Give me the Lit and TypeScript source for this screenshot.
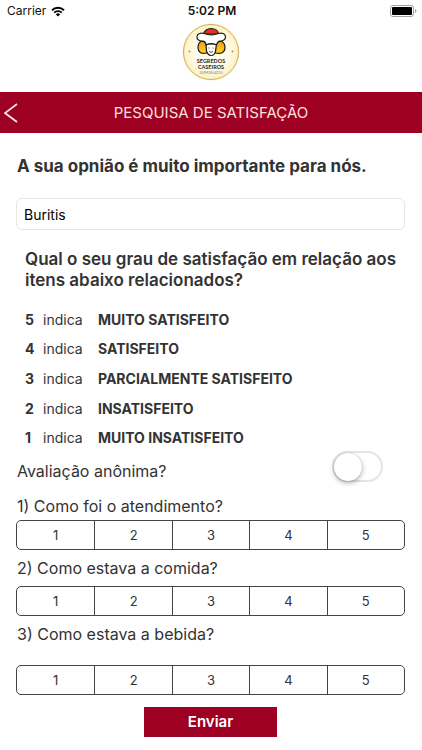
import { LitElement, html, css, svg } from "lit";
import { customElement, state } from "lit/decorators.js";

const logo = svg`
  <defs>
    <radialGradient id="glow" cx="60" cy="60" r="60" gradientUnits="userSpaceOnUse">
      <stop offset="0" stop-color="#fffdf4" />
      <stop offset="0.6" stop-color="#fffbe6" />
      <stop offset="0.9" stop-color="#fcf2c6" />
      <stop offset="1" stop-color="#fffbe6" stop-opacity="0" />
    </radialGradient>
    <linearGradient id="hair" x1="0" y1="0" x2="0" y2="1">
      <stop offset="0" stop-color="#f39a1a" />
      <stop offset="1" stop-color="#fbd822" />
    </linearGradient>
  </defs>
  <circle cx="60" cy="60" r="60" fill="url(#glow)" />
  <circle cx="60" cy="60" r="55" fill="none" stroke="#c9a44c" stroke-width="1.8" />
  <circle cx="17" cy="59" r="2" fill="#c98f3c" />
  <circle cx="103" cy="59" r="2" fill="#c98f3c" />
  <g stroke="#1c1a1a" stroke-width="2.4" stroke-linejoin="round" stroke-linecap="round">
    <path fill="url(#hair)" d="M41 38C35 41 34 46 34 51C34 60 40 65 52 62L52 42Z" />
    <path fill="url(#hair)" d="M80 38C87 41 88 46 88 51C88 60 81 65 69 62L69 42Z" />
    <path fill="#fff" d="M50 44L51 58C53 64 57 67 60 67C64 67 68 64 69 58L71 44Z" />
    <path fill="#e2311d" d="M46 24C46 17 53 13 60 13C68 13 75 17 75 24Z" />
    <path fill="#fff" d="M46 23C54 26 67 26 75 23C82 21 88 23 89 29C90 35 83 39 77 38C73 39 72 42 71 46C65 43 56 43 50 46C50 42 48 39 44 38C37 39 31 35 32 29C33 23 40 21 46 23Z" />
  </g>
  <path d="M56 51V53M64 51V53M56 59Q60 62 64 59" fill="none" stroke="#3a3430" stroke-width="1.8" />
  <text class="brand" x="60" y="81" text-anchor="middle">SEGREDOS</text>
  <text class="brand" x="60" y="94" text-anchor="middle">CASEIROS</text>
  <text class="tagline" x="60" y="103" text-anchor="middle">SUPERGELADOS</text>
`;

const grades = [
  { value: 5, label: "MUITO SATISFEITO" },
  { value: 4, label: "SATISFEITO" },
  { value: 3, label: "PARCIALMENTE SATISFEITO" },
  { value: 2, label: "INSATISFEITO" },
  { value: 1, label: "MUITO INSATISFEITO" },
];

const questions = [
  { id: "atendimento", text: "1) Como foi o atendimento?" },
  { id: "comida", text: "2) Como estava a comida?" },
  { id: "bebida", text: "3) Como estava a bebida?" },
];

@customElement("app-root")
export class AppRoot extends LitElement {
  static styles = css`
    :host {
      display: block;
      min-height: 100vh;
      background: #fff;
      color: #333;
      font-family: Inter, "Liberation Sans", sans-serif;
      font-size: 16px;
      line-height: 22px;
    }
    * {
      box-sizing: border-box;
    }
    h1, h2, p, fieldset, legend {
      margin: 0;
      padding: 0;
      border: 0;
      font: inherit;
    }
    .status {
      display: grid;
      grid-template-columns: 1fr auto 1fr;
      align-items: center;
      height: 22px;
      padding: 0 5px 0 7px;
      color: #111;
      font-size: 12px;
    }
    .carrier {
      display: flex;
      align-items: center;
      gap: 5px;
    }
    .time {
      font-weight: 600;
    }
    .battery {
      justify-self: end;
    }
    .brandbar {
      display: flex;
      justify-content: center;
      height: 70px;
    }
    .logo {
      width: 60px;
      height: 60px;
    }
    .brand {
      font-family: Lato, sans-serif;
      font-size: 11px;
      font-weight: 700;
      fill: #2a2624;
    }
    .tagline {
      font-family: Lato, sans-serif;
      font-size: 6px;
      fill: #8d8570;
    }
    .titlebar {
      display: grid;
      grid-template-columns: 40px 1fr 40px;
      align-items: center;
      height: 41px;
      background: #9e0023;
      color: #fbe0dd;
    }
    .back {
      display: flex;
      padding: 0 0 0 4px;
      border: 0;
      background: none;
      color: inherit;
    }
    .title {
      font-size: 15px;
      text-align: center;
    }
    .form {
      display: flex;
      flex-direction: column;
      padding: 22px 17px 12px 16px;
    }
    .intro,
    .label {
      padding-left: 1px;
    }
    .intro {
      font-size: 17px;
      font-weight: 700;
    }
    .store {
      width: 100%;
      height: 32px;
      margin-top: 21px;
      padding: 0 7px;
      border: 1px solid #e6e6e6;
      border-radius: 6px;
      background: #fff;
      color: #000;
      font: inherit;
      font-size: 14px;
    }
    .scale {
      padding: 19px 0 0 9px;
    }
    .ask {
      font-size: 17px;
      font-weight: 600;
      line-height: 21px;
    }
    .grades {
      display: grid;
      grid-auto-rows: 1fr;
      min-height: 148px;
      margin-top: 14px;
      font-size: 14px;
    }
    .grade {
      display: grid;
      grid-template-columns: 18px 55px 1fr;
      align-items: center;
    }
    .strong {
      font-weight: 700;
    }
    .anonymous {
      display: flex;
      align-items: flex-end;
      justify-content: space-between;
      margin-top: -2px;
      padding-right: 22px;
    }
    .switch {
      appearance: none;
      width: 51px;
      height: 31px;
      margin: 0;
      border: 2px solid #e5e5e5;
      border-radius: 16px;
      background: #fff;
    }
    .switch::before {
      content: "";
      display: block;
      width: 28px;
      height: 28px;
      border-radius: 50%;
      background: #fff;
      box-shadow: 0 2px 5px rgba(0, 0, 0, 0.3), 0 0 1px rgba(0, 0, 0, 0.3);
    }
    .switch:checked {
      border-color: #9e0023;
      background: #9e0023;
    }
    .switch:checked::before {
      margin-left: auto;
    }
    .question {
      min-width: 0;
      margin-top: 13px;
    }
    .question + .question {
      margin-top: 7px;
    }
    .question + .question .options {
      margin-top: 7px;
    }
    .question + .question + .question .options {
      margin-top: 20px;
    }
    .options {
      display: grid;
      grid-template-columns: repeat(5, 1fr);
      height: 30px;
      margin-top: 3px;
      border: 1px solid #444;
      border-radius: 5px;
      overflow: hidden;
      font-size: 13px;
    }
    .option {
      position: relative;
      display: flex;
      align-items: center;
      justify-content: center;
    }
    .option + .option {
      border-left: 1px solid #444;
    }
    .radio {
      appearance: none;
      position: absolute;
      inset: 0;
      margin: 0;
    }
    .option:has(.radio:checked) {
      background: #333;
      color: #fff;
    }
    .send {
      align-self: center;
      width: 34%;
      min-width: 132px;
      height: 30px;
      margin-top: 12px;
      border: 0;
      background: #9e0023;
      color: #fff;
      font: inherit;
      font-size: 15px;
      font-weight: 600;
    }
  `;

  @state() private store = "Buritis";

  render() {
    return html`
      <div class="status">
        <span class="carrier">
          Carrier
          <svg width="14" height="11" viewBox="0 0 14 11" aria-hidden="true">
            <path d="M1 4.2A8.6 8.6 0 0 1 13 4.2" fill="none" stroke="#000" stroke-width="1.9" />
            <path d="M3.2 6.6A5.4 5.4 0 0 1 10.8 6.6" fill="none" stroke="#000" stroke-width="1.8" />
            <path d="M7 10.6L4.9 8.4A3 3 0 0 1 9.1 8.4Z" fill="#000" />
          </svg>
        </span>
        <span class="time">5:02 PM</span>
        <svg class="battery" width="27" height="12" viewBox="0 0 27 12" aria-hidden="true">
          <rect x="0.5" y="0.5" width="23" height="11" rx="2.5" fill="#fff" stroke="#a0a0a0" />
          <rect x="2" y="2" width="20" height="8" rx="1" fill="#000" />
          <path d="M25 4V8Q26.5 7.4 26.5 6T25 4Z" fill="#a0a0a0" />
        </svg>
      </div>
      <div class="brandbar">
        <svg class="logo" viewBox="0 0 120 120" role="img" aria-label="Segredos Caseiros">${logo}</svg>
      </div>
      <header class="titlebar">
        <button class="back" type="button" aria-label="Voltar">
          <svg width="14" height="20" viewBox="0 0 14 20" aria-hidden="true">
            <path d="M13 1L1 10L13 19" fill="none" stroke="currentColor" stroke-width="1.8" />
          </svg>
        </button>
        <h1 class="title">PESQUISA DE SATISFAÇÃO</h1>
      </header>
      <form class="form" @submit=${(e: Event) => e.preventDefault()}>
        <p class="intro">A sua opnião é muito importante para nós.</p>
        <input
          class="store"
          type="text"
          aria-label="Loja"
          .value=${this.store}
          @input=${(e: Event) => (this.store = (e.target as HTMLInputElement).value)}
        />
        <section class="scale">
          <h2 class="ask">Qual o seu grau de satisfação em relação aos itens abaixo relacionados?</h2>
          <div class="grades">
            ${grades.map(
              (g) => html`<div class="grade">
                <span class="strong">${g.value}</span>
                <span>indica</span>
                <span class="strong">${g.label}</span>
              </div>`
            )}
          </div>
        </section>
        <div class="anonymous">
          <label class="label" for="anonymous">Avaliação anônima?</label>
          <input class="switch" id="anonymous" type="checkbox" role="switch" />
        </div>
        ${questions.map(
          (q) => html`<fieldset class="question">
            <legend class="label">${q.text}</legend>
            <div class="options">
              ${[1, 2, 3, 4, 5].map(
                (n) => html`<label class="option">
                  <input class="radio" type="radio" name=${q.id} value=${n} />
                  <span>${n}</span>
                </label>`
              )}
            </div>
          </fieldset>`
        )}
        <button class="send" type="submit">Enviar</button>
      </form>
    `;
  }
}
